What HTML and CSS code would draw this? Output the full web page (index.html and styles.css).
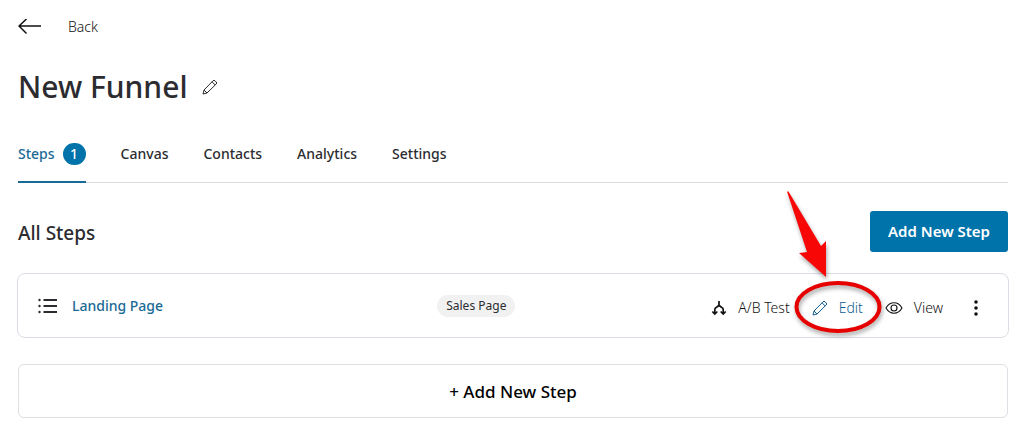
FILE: index.html
```html
<!DOCTYPE html>
<html lang="en">
<head>
    <meta charset="UTF-8">
    <meta name="viewport" content="width=device-width, initial-scale=1.0">
    <title>New Funnel</title>
    <link rel="stylesheet" href="styles.css">
</head>
<body>
    <svg class="sprite" aria-hidden="true">
        <symbol id="pencil" viewBox="0 0 16 16">
            <path d="M1 15l1-4L11 1.800a1.400 1.400 0 0 1 2 0l1.200 1.200a1.400 1.400 0 0 1 0 2L5 14zM2 11L5 14M10 2.800l3.200 3.200"/>
        </symbol>
    </svg>

    <header class="page-header">
        <a class="back" href="#">
            <svg class="back-arrow" viewBox="0 0 24 16" aria-hidden="true"><path d="M23 7H1M8.500 0L1 7l7.500 7.500"/></svg>
            Back
        </a>
        <div class="title-row">
            <h1>New Funnel</h1>
            <button class="icon-button" type="button" aria-label="Edit funnel name">
                <svg class="pencil" aria-hidden="true"><use href="#pencil"/></svg>
            </button>
        </div>
    </header>

    <nav class="tabs">
        <a class="tab active" href="#">Steps <span class="count">1</span></a>
        <a class="tab" href="#">Canvas</a>
        <a class="tab" href="#">Contacts</a>
        <a class="tab" href="#">Analytics</a>
        <a class="tab" href="#">Settings</a>
    </nav>

    <main>
        <div class="section-header">
            <h2>All Steps</h2>
            <button class="primary" type="button">Add New Step</button>
        </div>

        <div class="step-card">
            <div class="step-name">
                <svg class="list-icon" viewBox="0 0 20 16" aria-hidden="true">
                    <path d="M5.500 2H19M5.500 8H19M5.500 14H19"/>
                    <circle cx="1.500" cy="2" r="1.200"/>
                    <circle cx="1.500" cy="8" r="1.200"/>
                    <circle cx="1.500" cy="14" r="1.200"/>
                </svg>
                <a href="#">Landing Page</a>
            </div>
            <div class="step-type"><span class="tag">Sales Page</span></div>
            <div class="actions">
                <a class="action" href="#">
                    <svg class="split-icon" viewBox="0 0 16 16" aria-hidden="true">
                        <path d="M8 1v4.500M3.800 14V9.500Q3.800 8 5.500 7.200T8 5M8 5q.8 1.400 2.500 2.200T12.200 9.500V14M1.300 11.500L3.800 14l2.500-2.500M9.700 11.500l2.500 2.500 2.500-2.500"/>
                    </svg>
                    A/B Test
                </a>
                <a class="action edit" href="#">
                    <svg class="pencil" aria-hidden="true"><use href="#pencil"/></svg>
                    Edit
                    <!-- callout around the edit link -->
                    <svg class="callout" viewBox="0 0 100 160" aria-hidden="true">
                        <path class="callout-arrow" d="M1 2.500l1.500 0L35 57l5-5v36L13 64l8-1z"/>
                        <ellipse class="callout-ring" cx="52" cy="118" rx="41.500" ry="24"/>
                    </svg>
                </a>
                <a class="action view" href="#">
                    <svg class="eye-icon" viewBox="0 0 18 14" aria-hidden="true">
                        <path d="M1 7c2-3.500 4.800-5.200 8-5.200S15 3.500 17 7c-2 3.500-4.800 5.200-8 5.200S3 10.500 1 7z"/>
                        <circle cx="9" cy="7" r="3"/>
                    </svg>
                    View
                </a>
                <button class="icon-button more" type="button" aria-label="More actions">
                    <svg class="dots" viewBox="0 0 6 16" aria-hidden="true">
                        <circle cx="3" cy="2" r="1.800"/>
                        <circle cx="3" cy="8" r="1.800"/>
                        <circle cx="3" cy="14" r="1.800"/>
                    </svg>
                </button>
            </div>
        </div>

        <button class="add-step" type="button">+ Add New Step</button>
    </main>
</body>
</html>
```

FILE: styles.css
```css
* {
    box-sizing: border-box;
}
body {
    margin: 0;
    padding: 17px 17px 28px 18px;
    background: #fff;
    color: #2c2c30;
    font-family: "Segoe UI", "Noto Sans", "Open Sans", sans-serif;
    font-size: 14px;
    line-height: 20px;
}
a {
    color: inherit;
    text-decoration: none;
}
h1, h2 {
    margin: 0;
    font-weight: 500;
}
button {
    font-family: inherit;
    cursor: pointer;
}
svg {
    flex: none;
    fill: none;
    stroke: currentColor;
}
.sprite {
    position: absolute;
    width: 0;
    height: 0;
}
.back {
    display: inline-flex;
    align-items: center;
    gap: 26px;
    color: #111;
    font-weight: 300;
}
.back-arrow {
    width: 24px;
    height: 16px;
    stroke-width: 1.5;
}
.title-row {
    display: flex;
    align-items: center;
    gap: 14px;
    margin-top: 25px;
}
h1 {
    font-size: 30px;
    line-height: 44px;
}
.icon-button {
    display: flex;
    padding: 0;
    border: 0;
    background: none;
    color: inherit;
}
.pencil {
    width: 16px;
    height: 16px;
}
.tabs {
    display: flex;
    gap: 35px;
    height: 56px;
    margin-top: 18px;
    border-bottom: 1px solid #d9dbde;
    font-weight: 500;
}
.tab {
    display: flex;
    align-items: center;
    gap: 8px;
    margin-bottom: -1px;
    border-bottom: 2px solid transparent;
}
.tab.active {
    border-color: #1a6a96;
    color: #1a6a96;
}
.count {
    width: 23px;
    border-radius: 12px;
    background: #0073aa;
    color: #fff;
    font-size: 14px;
    line-height: 22px;
    text-align: center;
}
.section-header {
    display: flex;
    align-items: center;
    justify-content: space-between;
    margin-top: 28px;
}
h2 {
    padding-top: 2px;
    font-size: 19px;
    line-height: 28px;
}
.primary {
    padding: 10px 18px;
    border: 0;
    border-radius: 3px;
    background: #0073aa;
    color: #fff;
    font-size: 15px;
    font-weight: 600;
    line-height: 21px;
}
.step-card {
    display: grid;
    grid-template-columns: 14fr 5fr 14fr;
    align-items: center;
    height: 65px;
    margin: 21px -1px 0;
    padding: 1px 29px 0 20px;
    border: 1px solid #dcdce6;
    border-radius: 8px;
}
.step-name {
    display: flex;
    align-items: center;
    gap: 14px;
    color: #1a6a96;
    font-weight: 500;
}
.list-icon {
    width: 20px;
    height: 16px;
    color: #2c2c30;
    stroke-width: 1.8;
}
.list-icon circle, .dots circle {
    fill: currentColor;
    stroke: none;
}
.step-type {
    justify-self: start;
}
.tag {
    display: block;
    padding: 0 9px;
    border-radius: 11px;
    background: #f1f1f1;
    font-size: 12px;
    line-height: 22px;
}
.actions {
    display: flex;
    justify-content: flex-end;
    gap: 22px;
    padding-top: 4px;
    color: #111;
    font-weight: 300;
    white-space: nowrap;
}
.action {
    display: flex;
    align-items: center;
    gap: 11px;
}
.split-icon {
    width: 16px;
    height: 16px;
    stroke-width: 1.7;
}
.eye-icon {
    width: 18px;
    height: 14px;
    stroke-width: 1.1;
}
.more {
    align-items: center;
    margin-left: 8px;
}
.dots {
    width: 6px;
    height: 16px;
}
.edit {
    position: relative;
    color: #0f6090;
}
.callout {
    position: absolute;
    right: -23px;
    bottom: -31px;
    width: 100px;
    height: 160px;
    overflow: visible;
    filter: drop-shadow(1px 3px 2px rgba(0, 0, 0, 0.35));
    pointer-events: none;
}
.callout-arrow {
    fill: #f80707;
    stroke: none;
}
.callout-ring {
    stroke: #e60000;
    stroke-width: 4;
}
.add-step {
    width: 100%;
    margin-top: 26px;
    padding: 15px 14px 13px;
    border: 1px solid #dcdfe4;
    border-radius: 6px;
    background: #fff;
    color: #000;
    font-size: 17px;
    font-weight: 500;
    line-height: 24px;
}
```
